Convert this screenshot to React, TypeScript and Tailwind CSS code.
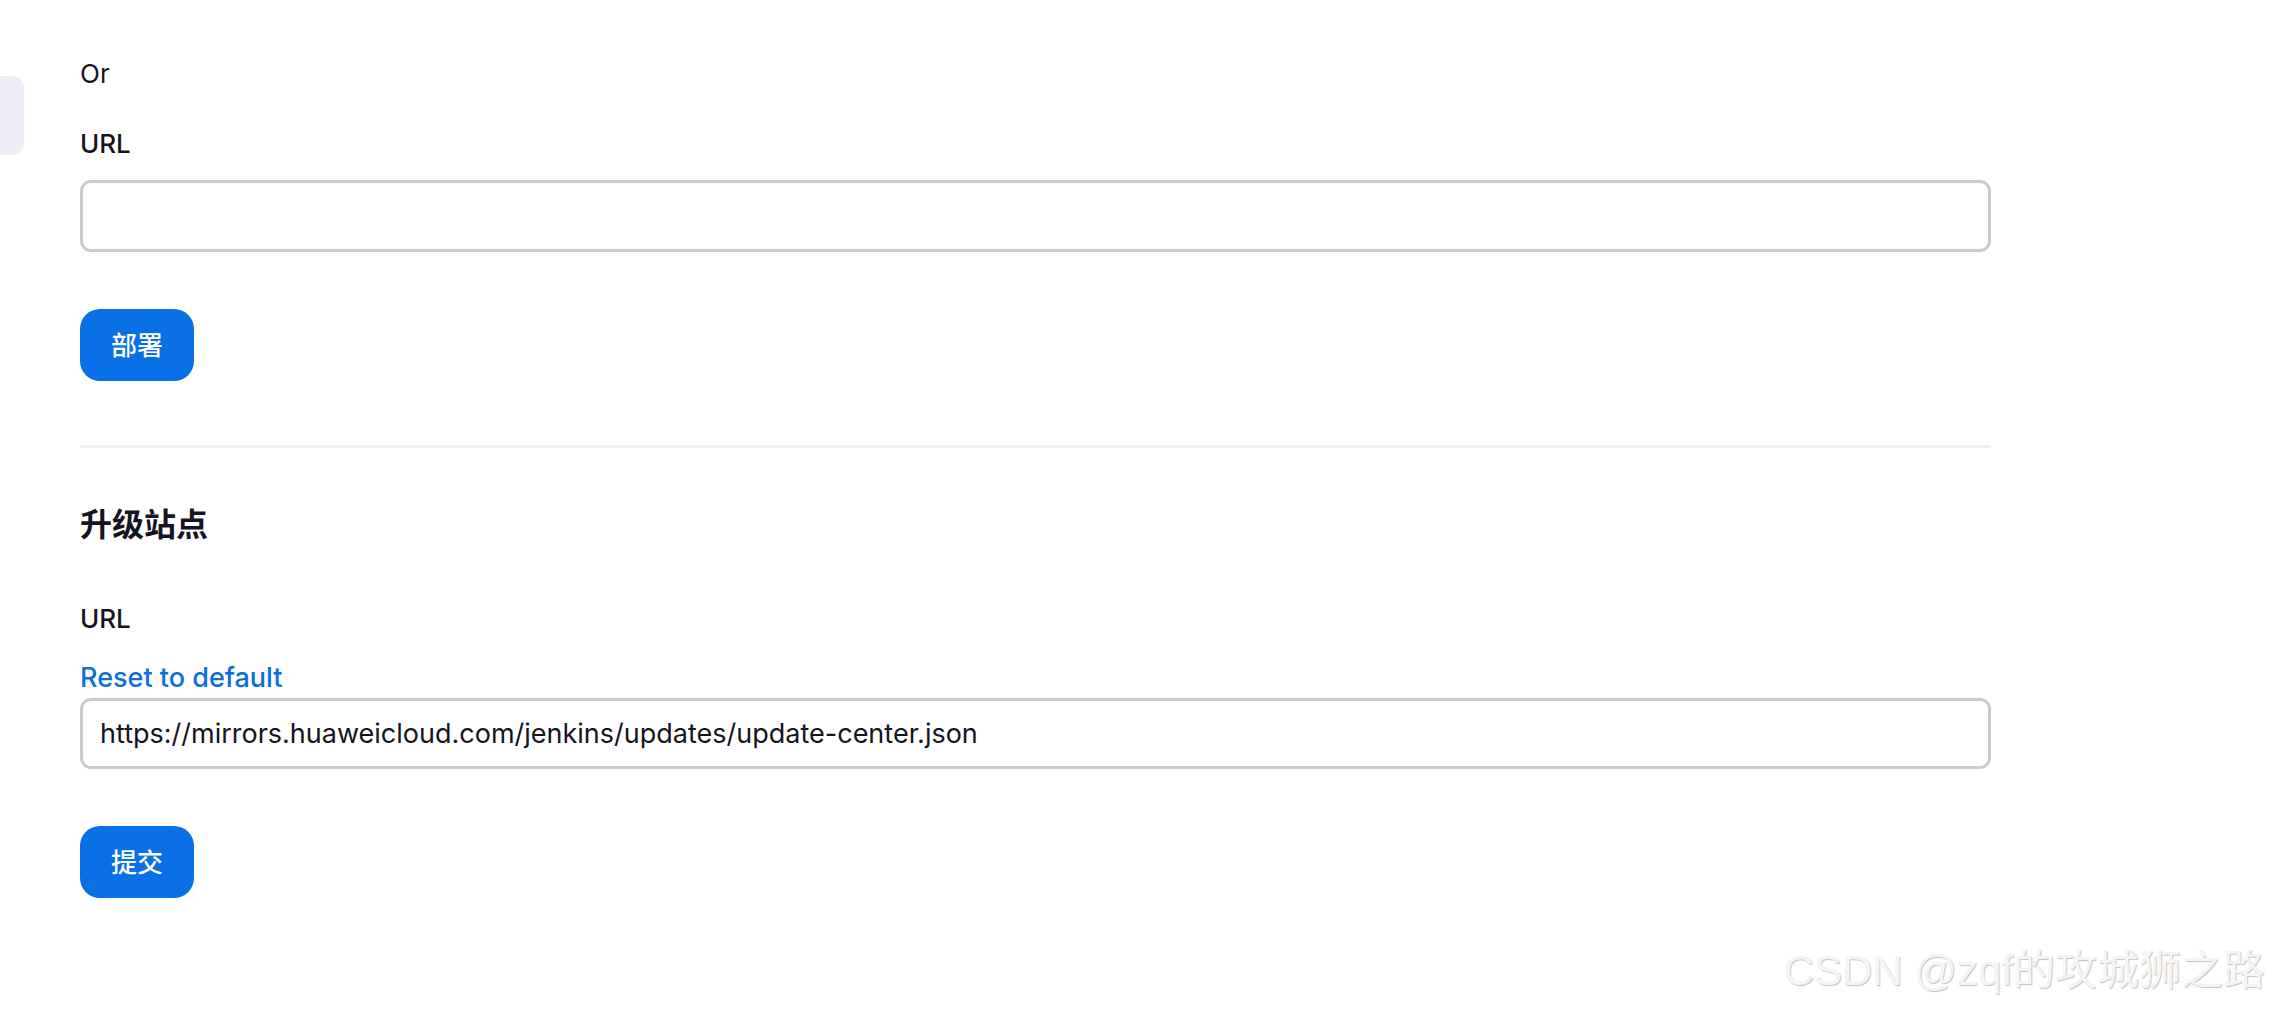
import React from "react";

const font = { fontFamily: '"Inter", "Noto Sans CJK SC", sans-serif' };

export default function App() {
  return (
    <div
      className="relative w-full h-[1010px] bg-white overflow-hidden text-[#14141f] antialiased"
      style={font}
    >
      <div className="absolute left-0 top-[76px] w-[24px] h-[79px] rounded-r-[12px] bg-[#ededf5]" />

      <div className="flex flex-col pl-[80px] w-[1991px] pt-[54px]">
        <div className="text-[26px] leading-[39px]">Or</div>
        <div className="mt-[31px] text-[26px] leading-[39px] font-medium">URL</div>
        <input
          type="text"
          className="mt-[17px] h-[72px] w-full rounded-[11px] border-[3px] border-[#c6cdcd] bg-white px-[17px] text-[27px] outline-none"
        />
        <div className="mt-[57px]">
          <button className="h-[72px] w-[114px] rounded-[20px] bg-[#0a70e6] text-white text-[26px] font-medium">
            部署
          </button>
        </div>
        <div className="mt-[64px] h-[3px] w-full bg-[#f1f1f1]" />
        <div className="mt-[53px] text-[32px] leading-[48px] font-bold">升级站点</div>
        <div className="mt-[50px] text-[26px] leading-[39px] font-medium">URL</div>
        <div className="mt-[20px] text-[27px] leading-[39px] font-medium text-[#0b6fdc]">
          Reset to default
        </div>
        <input
          type="text"
          defaultValue="https://mirrors.huaweicloud.com/jenkins/updates/update-center.json"
          className="mt-[1px] h-[71px] w-full rounded-[11px] border-[3px] border-[#c6cdcd] bg-white px-[17px] text-[27px] text-[#14141f] outline-none"
        />
        <div className="mt-[57px]">
          <button className="h-[72px] w-[114px] rounded-[20px] bg-[#0a70e6] text-white text-[26px] font-medium">
            提交
          </button>
        </div>
      </div>

      <div
        className="absolute right-[19px] bottom-[14px] text-[42px] leading-[50px] text-[#f4f4f4] whitespace-nowrap"
        style={{
          fontFamily: '"Liberation Sans", "Noto Sans CJK SC", sans-serif',
          textShadow: "1px 1px 1px #c4c4c4",
        }}
      >
        CSDN @zqf的攻城狮之路
      </div>
    </div>
  );
}
